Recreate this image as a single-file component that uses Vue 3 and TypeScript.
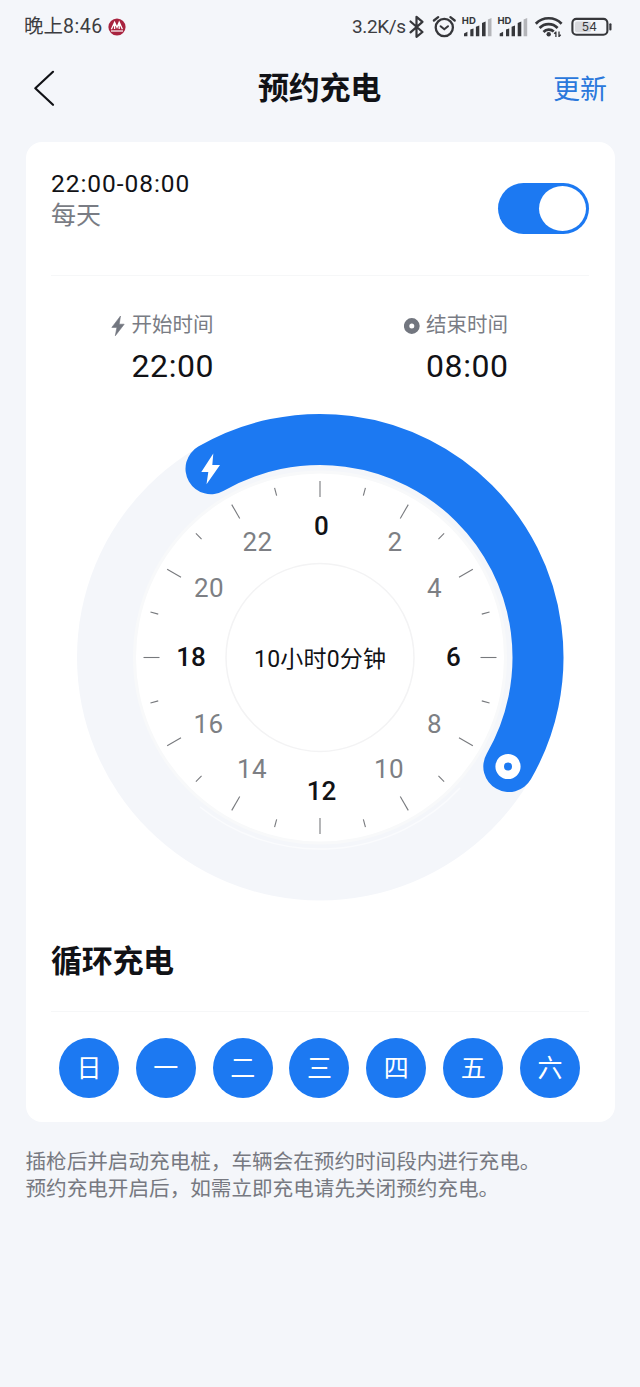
<script setup lang="ts">
import { ref } from 'vue'

interface HourLabel {
  text: string
  x: number
  y: number
  strong?: boolean
}

const enabled = ref(true)

const CX = 320
const CY = 657.5
const ARC_R = 218

const polar = (r: number, deg: number) => {
  const a = (deg * Math.PI) / 180
  return { x: CX + r * Math.sin(a), y: CY - r * Math.cos(a) }
}

const ticks = Array.from({ length: 24 }, (_, i) => {
  const major = i % 2 === 0
  const a = polar(major ? 160.5 : 167.5, i * 15)
  const b = polar(major ? 176.5 : 175.5, i * 15)
  return { x1: a.x, y1: a.y, x2: b.x, y2: b.y }
})

const start = polar(ARC_R, 330)
const end = polar(ARC_R, 120)
const arc = `M${start.x} ${start.y}A${ARC_R} ${ARC_R} 0 0 1 ${end.x} ${end.y}`

const hours: HourLabel[] = [
  { text: '0', x: 321.5, y: 525.5, strong: true },
  { text: '2', x: 395, y: 541.5 },
  { text: '4', x: 434.5, y: 588 },
  { text: '6', x: 453.5, y: 657, strong: true },
  { text: '8', x: 434.5, y: 723.5 },
  { text: '10', x: 389, y: 768.5 },
  { text: '12', x: 321.5, y: 791, strong: true },
  { text: '14', x: 252, y: 768.5 },
  { text: '16', x: 208.5, y: 723.5 },
  { text: '18', x: 191, y: 657, strong: true },
  { text: '20', x: 209, y: 588 },
  { text: '22', x: 257.5, y: 541.5 },
]

const days = ['日', '一', '二', '三', '四', '五', '六']
</script>

<template>
  <div class="page">
    <div class="status">
      <span class="clock">晚上<b>8:46</b></span>
      <svg class="bank" width="18" height="18" viewBox="0 0 18 18">
        <circle cx="9" cy="9" r="8.6" fill="#a8233f" />
        <path d="M3.4 11.2L6.6 4.2L9 9.4L11.2 4.2L14.4 11.2M6.6 4.6V11M11.2 4.6V11" fill="none" stroke="#fff" stroke-width="1.3" />
        <path d="M3 13H15" stroke="#fff" stroke-width="1.2" />
      </svg>
      <span class="speed">3.2K/s</span>
      <svg class="sys" width="210" height="34" viewBox="405 10 210 34">
        <path d="M410.5 21.5L422.5 32L416.5 36.8V16.8L422.5 21.8L410.5 32.3" fill="none" stroke="#36373b" stroke-width="2.2" stroke-linejoin="round" stroke-linecap="round" />
        <g fill="none" stroke="#36373b" stroke-width="2.3" stroke-linecap="round">
          <circle cx="444.3" cy="27.5" r="8.6" />
          <path d="M440.6 26.2L444.3 29.3L448 26.2" stroke-width="2" />
          <path d="M433.9 20.5L438.2 17.2M454.7 20.5L450.4 17.2" />
        </g>
        <g v-for="x in [0, 35.7]" :key="x" fill="#36373b">
          <text :x="461.8 + x" y="24.3" class="hd">HD</text>
          <path
            :transform="`translate(${x} 0)`"
            d="M464 33.5L467.4 31.8V36.3H464ZM470.3 29.5L473.5 28.5V36.3H470.3ZM475.9 26.8L479.3 25.5V36.3H475.9ZM482 23L485.6 21.5V36.3H482Z"
          />
          <path :transform="`translate(${x} 0)`" d="M487.9 19.4L491.5 18V36.3H487.9Z" fill="#b4b5b9" />
        </g>
        <g fill="none" stroke="#36373b" stroke-width="2.7">
          <path d="M535.8 23.7A18 18 0 0 1 561.6 23.7" />
          <path d="M539.6 28A12.5 12.5 0 0 1 557.6 28" />
          <path d="M543.5 32A7.4 7.4 0 0 1 553.8 31.6" />
        </g>
        <circle cx="548.7" cy="34.3" r="2.2" fill="#36373b" />
        <path d="M555.9 31.5V37M554.2 33.8L555.9 32M559 31.5V37M560.7 34.7L559 36.5" fill="none" stroke="#36373b" stroke-width="1.3" />
        <rect x="572.4" y="18.9" width="35" height="15.8" rx="4" fill="none" stroke="#36373b" stroke-width="2.1" />
        <rect x="575" y="21.4" width="16" height="10.8" rx="2" fill="#d8d9dd" />
        <path d="M610.4 24.3V29.5" stroke="#36373b" stroke-width="2.2" stroke-linecap="round" />
        <text x="589.6" y="31.2" class="pct">54</text>
      </svg>
    </div>

    <header class="nav">
      <svg class="back" width="24" height="40" viewBox="0 0 24 40">
        <path d="M21 3.8L3.3 20.2L21 36.8" fill="none" stroke="#111216" stroke-width="2.2" stroke-linecap="round" stroke-linejoin="round" />
      </svg>
      <h1>预约充电</h1>
      <span class="update">更新</span>
    </header>

    <main class="card">
      <section class="summary">
        <div>
          <div class="range">22:00-08:00</div>
          <div class="repeat">每天</div>
        </div>
        <button class="toggle" :class="{ on: enabled }" @click="enabled = !enabled"><i /></button>
      </section>

      <section class="times">
        <div class="time">
          <svg width="16" height="22" viewBox="0 0 16 22">
            <path d="M10.500 1L1.800 12.400H6.900L5.300 20.800L14.200 9.200H9.200Z" fill="#72767f" stroke="#72767f" stroke-width="0.6" stroke-linejoin="round" />
          </svg>
          <span class="label">开始时间</span>
          <span class="value">22:00</span>
        </div>
        <div class="time">
          <svg width="16" height="22" viewBox="0 0 16 22">
            <circle cx="7.8" cy="11" r="5.2" fill="none" stroke="#72767f" stroke-width="5.4" />
          </svg>
          <span class="label">结束时间</span>
          <span class="value">08:00</span>
        </div>
      </section>

      <svg class="dial" width="490" height="490" viewBox="75 412 490 490">
        <circle :cx="CX" :cy="CY" r="243" fill="#f4f6fa" />
        <circle :cx="CX" :cy="CY" r="187" fill="#f8f9fa" />
        <circle :cx="CX" :cy="CY" r="184" fill="#fff" />
        <path d="M200 807A191.500 191.500 0 0 0 460 788" fill="none" stroke="#fafbfd" stroke-width="1.5" />
        <circle :cx="CX" :cy="CY" r="94" fill="none" stroke="#f3f3f4" stroke-width="1.5" />
        <line v-for="(t, i) in ticks" :key="i" v-bind="t" stroke="#77797d" stroke-width="1.1" />
        <text v-for="h in hours" :key="h.text" :x="h.x" :y="h.y + 9.3" class="hour" :class="{ strong: h.strong }">{{ h.text }}</text>
        <text :x="CX" y="666.5" class="duration" textLength="132">10小时0分钟</text>
        <path :d="arc" fill="none" stroke="#1c79f2" stroke-width="51" stroke-linecap="round" />
        <path d="M213.300 453.500L201.300 472H208.300L206.500 484.300L220 465H212.300Z" fill="#fff" />
        <circle cx="508" cy="766.500" r="8.300" fill="none" stroke="#fff" stroke-width="8.600" />
      </svg>

      <h2>循环充电</h2>

      <div class="days">
        <span v-for="d in days" :key="d" class="day">{{ d }}</span>
      </div>
    </main>

    <p class="note">插枪后并启动充电桩，车辆会在预约时间段内进行充电。<br />预约充电开启后，如需立即充电请先关闭预约充电。</p>
  </div>
</template>

<style>
body {
  background: #f4f6fa;
}
</style>

<style scoped>
.page {
  box-sizing: border-box;
  width: 640px;
  height: 1387px;
  overflow: hidden;
  background: #f4f6fa;
  color: #111216;
  font-family: Roboto, 'Noto Sans CJK SC', sans-serif;
}
.status {
  display: flex;
  align-items: center;
  height: 54px;
  padding-left: 24px;
  color: #3c3d41;
}
.clock {
  width: 84px;
  font-size: 19.5px;
  line-height: 30px;
  white-space: nowrap;
}
.clock b {
  font-weight: 400;
  letter-spacing: 0.5px;
}
.bank {
  flex: none;
}
.speed {
  width: 53px;
  margin-left: 226px;
  font-size: 19px;
  letter-spacing: -0.4px;
  line-height: 30px;
  white-space: nowrap;
}
.sys {
  flex: none;
}
.hd {
  font-family: Inter, sans-serif;
  font-size: 9.5px;
  font-weight: 700;
}
.pct {
  font-family: Inter, sans-serif;
  font-size: 12px;
  letter-spacing: 0.2px;
  text-anchor: middle;
  fill: #36373b;
}
.nav {
  display: grid;
  grid-template-columns: 1fr auto 1fr;
  align-items: center;
  height: 68px;
  padding: 0 33px 0 32px;
}
h1,
h2 {
  margin: 0;
  font-size: 31px;
  font-weight: 700;
  line-height: 44px;
  letter-spacing: -0.3px;
}
h1 {
  padding-top: 2px;
}
.update {
  justify-self: end;
  padding-top: 3px;
  font-size: 27px;
  line-height: 40px;
  color: #2a78dc;
}
.card {
  display: flex;
  flex-direction: column;
  box-sizing: border-box;
  width: 589px;
  height: 980px;
  margin: 20px 0 0 26px;
  border-radius: 16px;
  background: #fff;
}
.summary {
  display: flex;
  justify-content: space-between;
  align-items: center;
  box-sizing: border-box;
  height: 134px;
  margin: 0 26px 0 25px;
  border-bottom: 1px solid #f6f7f8;
}
.range {
  margin-top: -18px;
  font-size: 24.5px;
  line-height: 32px;
  letter-spacing: 0.95px;
}
.repeat {
  padding-top: 1px;
  font-size: 25px;
  line-height: 30px;
  color: #797c84;
}
.toggle {
  display: flex;
  justify-content: flex-start;
  box-sizing: border-box;
  width: 91px;
  height: 51px;
  padding: 3px;
  border: 0;
  border-radius: 26px;
  background: #d5d8de;
}
.toggle.on {
  justify-content: flex-end;
  background: #1c79f2;
}
.toggle i {
  width: 47px;
  height: 45px;
  border-radius: 50%;
  background: #fff;
}
.times {
  display: grid;
  grid-template-columns: 1fr 1fr;
  height: 136px;
}
.time {
  display: grid;
  grid-template-columns: 16px auto;
  grid-template-rows: 30px 52px;
  column-gap: 6px;
  align-items: center;
  align-content: start;
  justify-content: start;
  padding: 34px 0 0 83.5px;
}
.time svg {
  margin-top: 1px;
}
.label {
  font-size: 20.5px;
  line-height: 30px;
  color: #797c84;
}
.value {
  grid-column: 2;
  font-size: 32px;
  line-height: 52px;
  letter-spacing: 0.6px;
}
.dial {
  flex: none;
  display: block;
  margin-left: 49px;
}
.hour {
  font-size: 26px;
  letter-spacing: 0.5px;
  text-anchor: middle;
  fill: #7d7f84;
}
.hour.strong {
  font-weight: 500;
  letter-spacing: 0;
  fill: #111216;
}
.duration {
  font-size: 23px;
  text-anchor: middle;
  fill: #111216;
}
h2 {
  height: 88px;
  box-sizing: border-box;
  margin: 22px 26px 0 25px;
  padding-top: 16px;
  border-bottom: 1px solid #f6f7f8;
}
.days {
  display: flex;
  justify-content: space-between;
  padding: 26px 35px 0 33px;
}
.day {
  width: 60px;
  height: 60px;
  border-radius: 50%;
  background: #1c79f2;
  color: #fff;
  font-size: 25px;
  line-height: 61px;
  text-align: center;
}
.note {
  margin: 27px 0 0 25.5px;
  font-size: 20.6px;
  line-height: 27px;
  color: #777981;
  white-space: nowrap;
}
</style>
